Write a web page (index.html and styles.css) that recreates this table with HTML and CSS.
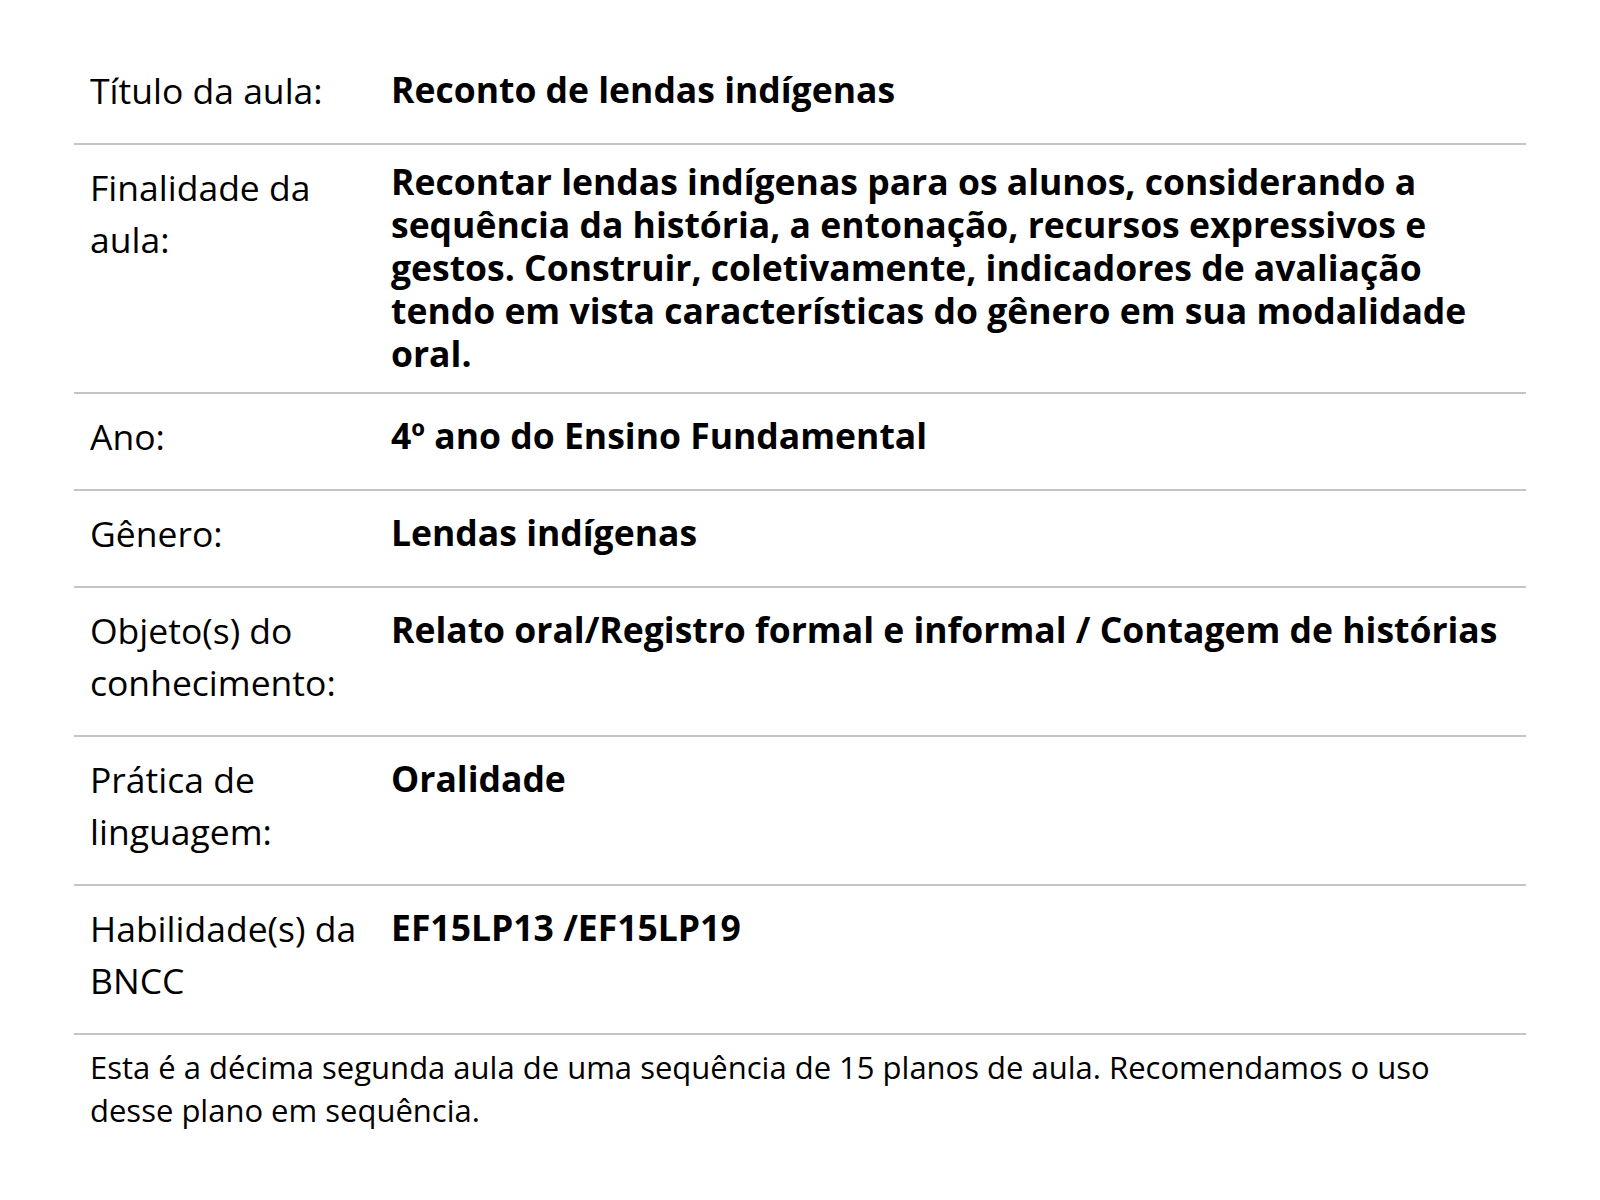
FILE: index.html
```html
<!DOCTYPE html>
<html lang="pt-BR">
<head>
    <meta charset="UTF-8">
    <meta name="viewport" content="width=device-width, initial-scale=1.0">
    <link rel="stylesheet" href="styles.css">
</head>
<body>
    <div class="plano">
        <div class="linha">
            <div class="rotulo">Título da aula:</div>
            <div class="valor">Reconto de lendas indígenas</div>
        </div>
        <div class="linha">
            <div class="rotulo">Finalidade da aula:</div>
            <div class="valor longo">Recontar lendas indígenas para os alunos, considerando a sequência da história, a entonação, recursos expressivos e gestos. Construir, coletivamente, indicadores de avaliação tendo em vista características do gênero em sua modalidade oral.</div>
        </div>
        <div class="linha">
            <div class="rotulo">Ano:</div>
            <div class="valor">4º ano do Ensino Fundamental</div>
        </div>
        <div class="linha">
            <div class="rotulo">Gênero:</div>
            <div class="valor">Lendas indígenas</div>
        </div>
        <div class="linha">
            <div class="rotulo">Objeto(s) do conhecimento:</div>
            <div class="valor">Relato oral/Registro formal e informal / Contagem de histórias</div>
        </div>
        <div class="linha">
            <div class="rotulo">Prática de linguagem:</div>
            <div class="valor">Oralidade</div>
        </div>
        <div class="linha">
            <div class="rotulo">Habilidade(s) da BNCC</div>
            <div class="valor">EF15LP13 /EF15LP19</div>
        </div>
        <p class="nota">Esta é a décima segunda aula de uma sequência de 15 planos de aula. Recomendamos o uso desse plano em sequência.</p>
    </div>
</body>
</html>
```

FILE: styles.css
```css
body {
    margin: 0;
    padding: 0;
    background-color: #ffffff;
    color: #000000;
    font-family: 'Open Sans', 'Noto Sans', sans-serif;
}

.plano {
    width: 1452px;
    margin: 0 auto;
    padding-top: 48px;
}

/* cada linha da tabela */
.linha {
    display: grid;
    grid-template-columns: 317px 1fr;
    align-items: start;
    border-bottom: 2px solid #c4c4c4;
}

.rotulo {
    padding: 16px 16px 27px 16px;
    font-size: 35.5px;
    line-height: 52px;
}

.valor {
    padding: 20px 16px 0 0;
    font-size: 35.5px;
    font-weight: 700;
    line-height: 43px;
}

/* texto de várias linhas ocupa a linha toda */
.valor.longo {
    padding: 15px 16px 17px 0;
}

.nota {
    margin: 0;
    padding: 11px 16px;
    font-size: 31px;
    line-height: 43px;
}
```
